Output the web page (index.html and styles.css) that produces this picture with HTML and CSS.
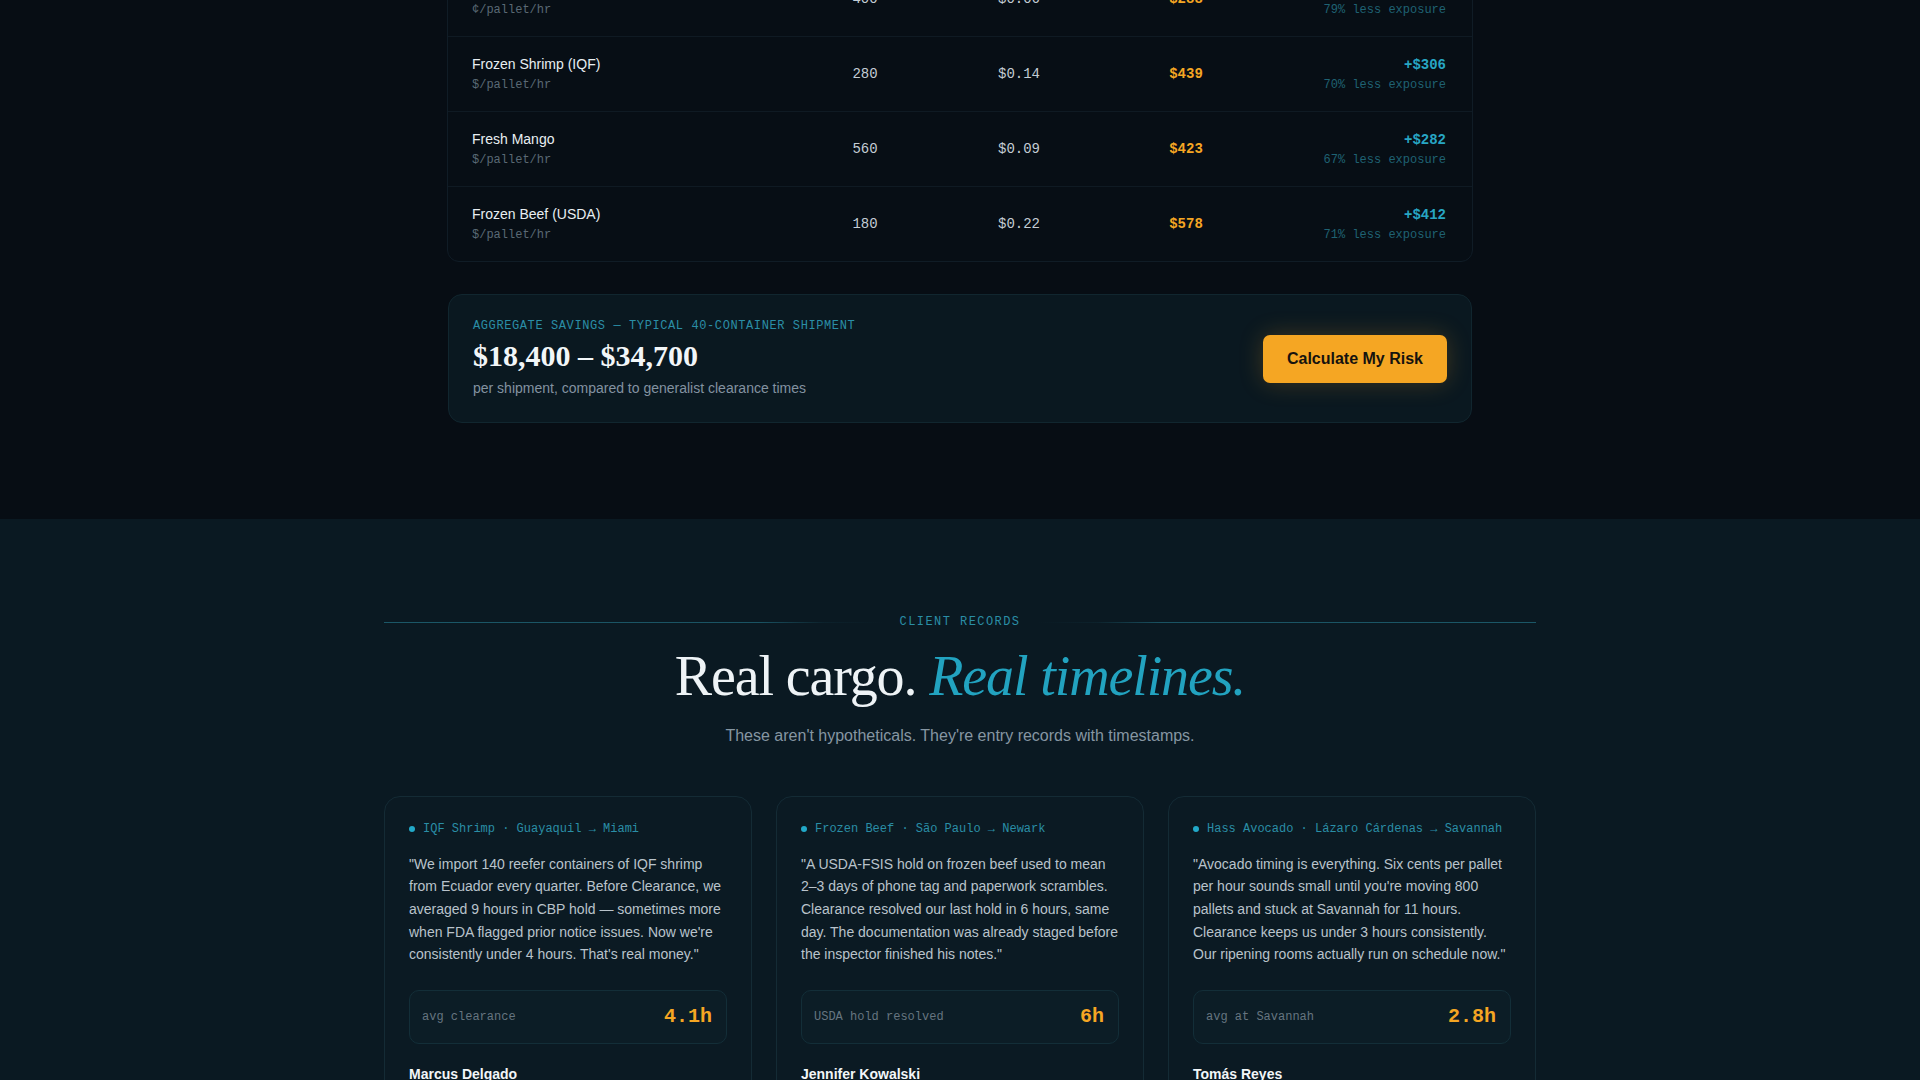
FILE: index.html
```html
<!DOCTYPE html>
<html lang="en">

<head>
    <meta charset="UTF-8">
    <meta name="viewport" content="width=device-width, initial-scale=1.0">
    <title>Clearance - Cost of delay</title>
    <link rel="stylesheet" href="styles.css">
</head>

<body>
    <section class="costs">
        <div class="cost-table">
            <div class="cost-row">
                <div class="cargo">
                    <span class="cargo-name">Hass Avocado</span>
                    <span class="cargo-unit">¢/pallet/hr</span>
                </div>
                <div class="num">400</div>
                <div class="num">$0.06</div>
                <div class="num exposure">$288</div>
                <div class="saving">
                    <span class="saving-amount">+$228</span>
                    <span class="saving-note">79% less exposure</span>
                </div>
            </div>
            <div class="cost-row">
                <div class="cargo">
                    <span class="cargo-name">Frozen Shrimp (IQF)</span>
                    <span class="cargo-unit">$/pallet/hr</span>
                </div>
                <div class="num">280</div>
                <div class="num">$0.14</div>
                <div class="num exposure">$439</div>
                <div class="saving">
                    <span class="saving-amount">+$306</span>
                    <span class="saving-note">70% less exposure</span>
                </div>
            </div>
            <div class="cost-row">
                <div class="cargo">
                    <span class="cargo-name">Fresh Mango</span>
                    <span class="cargo-unit">$/pallet/hr</span>
                </div>
                <div class="num">560</div>
                <div class="num">$0.09</div>
                <div class="num exposure">$423</div>
                <div class="saving">
                    <span class="saving-amount">+$282</span>
                    <span class="saving-note">67% less exposure</span>
                </div>
            </div>
            <div class="cost-row">
                <div class="cargo">
                    <span class="cargo-name">Frozen Beef (USDA)</span>
                    <span class="cargo-unit">$/pallet/hr</span>
                </div>
                <div class="num">180</div>
                <div class="num">$0.22</div>
                <div class="num exposure">$578</div>
                <div class="saving">
                    <span class="saving-amount">+$412</span>
                    <span class="saving-note">71% less exposure</span>
                </div>
            </div>
        </div>

        <div class="aggregate">
            <div class="aggregate-text">
                <p class="aggregate-label">AGGREGATE SAVINGS — TYPICAL 40-CONTAINER SHIPMENT</p>
                <p class="aggregate-amount">$18,400 – $34,700</p>
                <p class="aggregate-sub">per shipment, compared to generalist clearance times</p>
            </div>
            <a class="btn-risk" href="#">Calculate My Risk</a>
        </div>
    </section>

    <section class="records">
        <div class="records-inner">
            <div class="eyebrow">
                <span class="eyebrow-line"></span>
                <span class="eyebrow-text">CLIENT RECORDS</span>
                <span class="eyebrow-line right"></span>
            </div>
            <h2 class="records-title">Real cargo. <em>Real timelines.</em></h2>
            <p class="records-sub">These aren't hypotheticals. They're entry records with timestamps.</p>

            <div class="record-grid">
                <article class="record">
                    <div class="route"><span class="dot"></span>IQF Shrimp · Guayaquil → Miami</div>
                    <p class="quote">"We import 140 reefer containers of IQF shrimp from Ecuador every quarter. Before Clearance, we averaged 9 hours in CBP hold — sometimes more when FDA flagged prior notice issues. Now we're consistently under 4 hours. That's real money."</p>
                    <div class="stat">
                        <span class="stat-label">avg clearance</span>
                        <span class="stat-value">4.1h</span>
                    </div>
                    <div class="person">
                        <span class="person-name">Marcus Delgado</span>
                        <span class="person-role">Director of Logistics, Pacific Catch Imports</span>
                    </div>
                </article>
                <article class="record">
                    <div class="route"><span class="dot"></span>Frozen Beef · São Paulo → Newark</div>
                    <p class="quote">"A USDA-FSIS hold on frozen beef used to mean 2–3 days of phone tag and paperwork scrambles. Clearance resolved our last hold in 6 hours, same day. The documentation was already staged before the inspector finished his notes."</p>
                    <div class="stat">
                        <span class="stat-label">USDA hold resolved</span>
                        <span class="stat-value">6h</span>
                    </div>
                    <div class="person">
                        <span class="person-name">Jennifer Kowalski</span>
                        <span class="person-role">Import Manager, Meridian Protein Group</span>
                    </div>
                </article>
                <article class="record">
                    <div class="route"><span class="dot"></span>Hass Avocado · Lázaro Cárdenas → Savannah</div>
                    <p class="quote">"Avocado timing is everything. Six cents per pallet per hour sounds small until you're moving 800 pallets and stuck at Savannah for 11 hours. Clearance keeps us under 3 hours consistently. Our ripening rooms actually run on schedule now."</p>
                    <div class="stat">
                        <span class="stat-label">avg at Savannah</span>
                        <span class="stat-value">2.8h</span>
                    </div>
                    <div class="person">
                        <span class="person-name">Tomás Reyes</span>
                        <span class="person-role">VP Supply Chain, Verde Fresh Distribution</span>
                    </div>
                </article>
            </div>
        </div>
    </section>
</body>

</html>
```

FILE: styles.css
```css
html,
body,
div,
p,
h2,
section,
article {
    margin: 0;
    padding: 0;
}

body {
    background: #070d14;
    font-family: "Liberation Sans", Arial, sans-serif;
    color: #e6edf2;
}

a {
    text-decoration: none;
}

/* cost table */
.costs {
    padding-bottom: 96px;
    overflow: hidden;
}

.cost-table {
    width: 1024px;
    margin: -39px auto 0;
    border: 1px solid #101c26;
    border-radius: 0 0 12px 12px;
    background: #070e15;
}

.cost-row {
    display: grid;
    grid-template-columns: 316px 154px 154px 180px 170px;
    align-items: center;
    padding: 17px 24px 18px;
    border-bottom: 1px solid #0f1a23;
}

.cost-row:last-child {
    border-bottom: none;
}

.cargo {
    display: flex;
    flex-direction: column;
}

.cargo-name {
    font-size: 14px;
    line-height: 20px;
    color: #e8eef2;
}

.cargo-unit {
    margin-top: 3px;
    font-family: "Liberation Mono", monospace;
    font-size: 12px;
    line-height: 16px;
    color: #5a6974;
}

.num {
    text-align: center;
    font-family: "Liberation Mono", monospace;
    font-size: 14px;
    color: #c3ccd4;
}

.num.exposure {
    color: #f5a623;
    font-weight: bold;
}

.saving {
    display: flex;
    flex-direction: column;
    align-items: flex-end;
    font-family: "Liberation Mono", monospace;
}

.saving-amount {
    font-size: 14px;
    line-height: 20px;
    font-weight: bold;
    color: #27a6c4;
}

.saving-note {
    margin-top: 2px;
    font-size: 12px;
    line-height: 16px;
    color: #1f6273;
}

/* aggregate */
.aggregate {
    width: 1024px;
    margin: 32px auto 0;
    box-sizing: border-box;
    display: flex;
    align-items: center;
    justify-content: space-between;
    padding: 24px 24px 23px;
    border: 1px solid #11262f;
    border-radius: 14px;
    background: #0a1820;
}

.aggregate-label {
    font-family: "Liberation Mono", monospace;
    font-size: 12px;
    line-height: 14px;
    letter-spacing: 0.05em;
    color: #2a8ea6;
}

.aggregate-amount {
    margin-top: 5px;
    font-family: "Liberation Serif", "Times New Roman", serif;
    font-size: 30px;
    line-height: 36px;
    font-weight: bold;
    color: #f2f6f8;
}

.aggregate-sub {
    margin-top: 4px;
    font-size: 14px;
    line-height: 21px;
    color: #8392a0;
}

.btn-risk {
    display: block;
    padding: 14px 24px;
    line-height: 20px;
    font-size: 16px;
    font-weight: bold;
    color: #15130f;
    background: #f5a623;
    border-radius: 7px;
    box-shadow: 0 0 24px rgba(245, 166, 35, 0.22);
}

/* client records */
.records {
    background: #0a1922;
    padding: 95px 0 80px;
}

.records-inner {
    width: 1152px;
    margin: 0 auto;
}

.eyebrow {
    display: flex;
    align-items: center;
    gap: 16px;
}

.eyebrow-line {
    flex: 1;
    height: 1px;
    background: linear-gradient(90deg, #1b5767 0%, #1a5363 75%, rgba(26, 83, 99, 0.15) 88%, rgba(26, 83, 99, 0) 100%);
}

.eyebrow-line.right {
    background: linear-gradient(270deg, #1b5767 0%, #1a5363 75%, rgba(26, 83, 99, 0.15) 88%, rgba(26, 83, 99, 0) 100%);
}

.eyebrow-text {
    font-family: "Liberation Mono", monospace;
    font-size: 12px;
    line-height: 16px;
    letter-spacing: 0.12em;
    color: #2a8ea6;
}

.records-title {
    margin-top: 16px;
    text-align: center;
    font-family: "Liberation Serif", "Times New Roman", serif;
    font-weight: normal;
    font-size: 56px;
    line-height: 1.1;
    letter-spacing: -0.02em;
    color: #eef3f6;
}

.records-title em {
    color: #22a3c0;
}

.records-sub {
    margin-top: 16px;
    text-align: center;
    font-size: 16px;
    line-height: 1.5;
    color: #8696a2;
}

.record-grid {
    margin-top: 48px;
    display: grid;
    grid-template-columns: repeat(3, 1fr);
    gap: 24px;
}

.record {
    padding: 24px;
    border: 1px solid #142b35;
    border-radius: 16px;
    background: #0b1a23;
}

.route {
    display: flex;
    align-items: center;
    gap: 8px;
    font-family: "Liberation Mono", monospace;
    font-size: 12px;
    line-height: 16px;
    color: #2a8ea6;
    white-space: nowrap;
}

.dot {
    width: 6px;
    height: 6px;
    border-radius: 50%;
    background: #22a9c8;
}

.quote {
    margin-top: 16px;
    font-size: 14px;
    line-height: 22.7px;
    color: #b9c3cb;
}

.stat {
    margin-top: 24px;
    display: flex;
    align-items: center;
    justify-content: space-between;
    padding: 13px 14px 13px 12px;
    border: 1px solid #132e38;
    border-radius: 10px;
    background: #0c1d26;
}

.stat-label {
    font-family: "Liberation Mono", monospace;
    font-size: 12px;
    color: #667580;
}

.stat-value {
    font-family: "Liberation Mono", monospace;
    font-size: 20px;
    line-height: 26px;
    font-weight: bold;
    color: #f5a623;
}

.person {
    margin-top: 20px;
    display: flex;
    flex-direction: column;
}

.person-name {
    font-size: 14px;
    line-height: 21px;
    font-weight: bold;
    color: #f2f6f8;
}

.person-role {
    font-size: 13px;
    line-height: 18px;
    color: #7d8c97;
}
```
